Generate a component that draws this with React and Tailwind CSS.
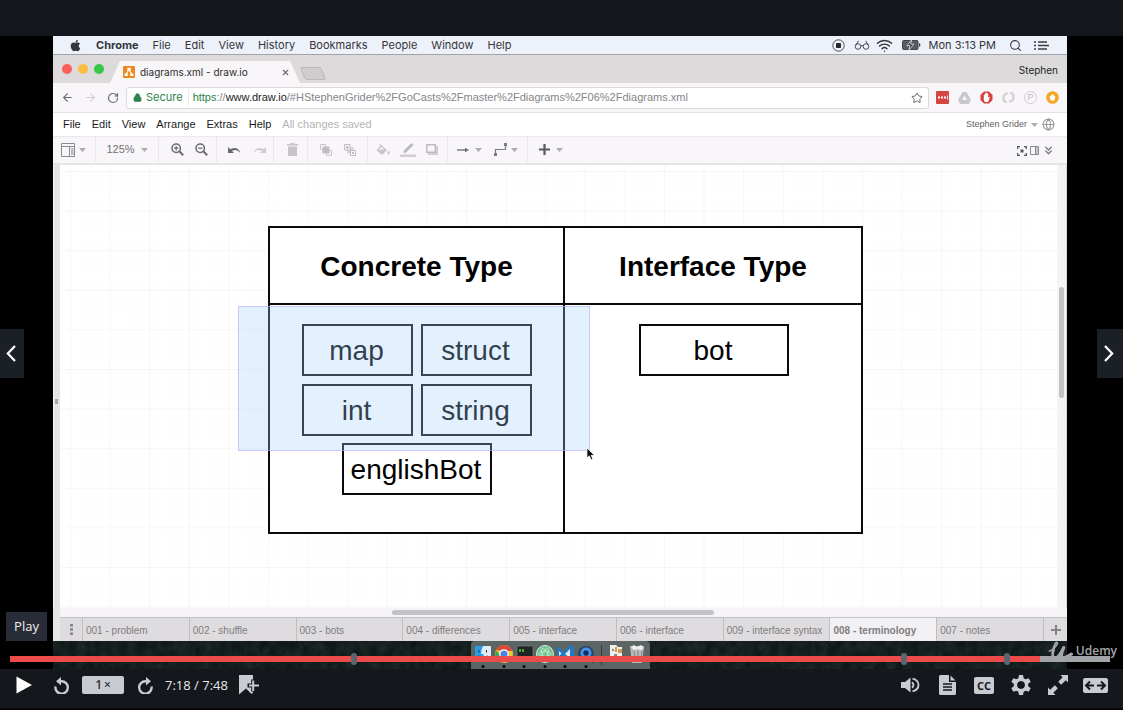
import React from "react";
import { FaApple } from "react-icons/fa";
import {
  ArrowLeft,
  ArrowRight,
  ChevronsDown,
  Globe,
  Lock,
  RotateCw,
  Search,
  Star,
  Wifi,
  X,
} from "lucide-react";

const macMenus = ["File", "Edit", "View", "History", "Bookmarks", "People", "Window", "Help"];
const drawMenus = ["File", "Edit", "View", "Arrange", "Extras", "Help"];
const pages = [
  "001 - problem",
  "002 - shuffle",
  "003 - bots",
  "004 - differences",
  "005 - interface",
  "006 - interface",
  "009 - interface syntax",
  "008 - terminology",
  "007 - notes",
];

const nodes = [
  { label: "map", place: "left-[242px] top-[159px] w-[111px]" },
  { label: "struct", place: "left-[361px] top-[159px] w-[111px]" },
  { label: "int", place: "left-[242px] top-[219px] w-[111px]" },
  { label: "string", place: "left-[361px] top-[219px] w-[111px]" },
  { label: "englishBot", place: "left-[282px] top-[278px] w-[150px]" },
  { label: "bot", place: "left-[579px] top-[159px] w-[150px]" },
];

function Caret() {
  return (
    <svg width="7" height="4" viewBox="0 0 7 4" aria-hidden="true">
      <path d="M0 0h7L3.5 4z" fill="#aeacb0" />
    </svg>
  );
}

function MacMenuBar() {
  return (
    <div className="flex h-[19px] items-center border-b border-[#a3a4aa] bg-[#edf1fa] pl-4 pr-[18px] font-[Inter,sans-serif] text-[11px] leading-4 text-[#34363b]">
      <FaApple size={13} className="mr-[14px]" />
      <nav className="flex items-center gap-[14px]">
        <button className="font-bold">Chrome</button>
        {macMenus.map((m) => (
          <button key={m}>{m}</button>
        ))}
      </nav>
      <div className="ml-auto flex items-center">
        <svg width="13" height="13" viewBox="0 0 13 13" className="mr-[9px]" aria-hidden="true">
          <circle cx="6.5" cy="6.5" r="5.700" fill="none" stroke="#4c4e54" />
          <rect x="4" y="4" width="5" height="5" rx=".8" fill="#25272b" />
        </svg>
        <svg width="16" height="10" viewBox="0 0 16 10" className="mr-[6px]" fill="none" stroke="#4c4e54" aria-hidden="true">
          <circle cx="4" cy="6.500" r="2.800" />
          <circle cx="12" cy="6.500" r="2.800" />
          <path d="M6.800 6q1.200-1 2.400 0M1.300 6 4.500.8M14.700 6l-3-5.200" />
        </svg>
        <Wifi size={17} strokeWidth={2} className="mr-[9px]" />
        <svg width="19" height="10" viewBox="0 0 19 10" className="mr-2" aria-hidden="true">
          <rect x=".5" y=".5" width="15.500" height="9" rx="1" fill="#5a5c62" stroke="#44464b" />
          <path d="M17 3v4q1.500-.5 1.500-2T17 3" fill="#44464b" />
          <path d="M9.500 0 5 5.600h3L7 10l4.800-5.800H8.700z" fill="#26282c" stroke="#edf1fa" strokeWidth=".8" />
        </svg>
        <span className="mr-[13px]">Mon 3:13 PM</span>
        <Search size={13} strokeWidth={2} className="mr-[12px]" />
        <svg width="15" height="9" viewBox="0 0 15 9" stroke="#3c3e43" strokeWidth="1.400" aria-hidden="true">
          <path d="M0 1h2M0 4.500h2M0 8h2M4 1h9M4 4.500h11M4 8h9" />
        </svg>
      </div>
    </div>
  );
}

function TabStrip() {
  return (
    <div className="flex h-7 items-end bg-[#dcdada]">
      <div className="flex h-7 w-[57px] items-center gap-[6px] pl-[9px]">
        <i className="size-[10px] rounded-full bg-[#fb5f57]" />
        <i className="size-[10px] rounded-full bg-[#fdbd40]" />
        <i className="size-[10px] rounded-full bg-[#35c84a]" />
      </div>
      <div className="flex h-[22px] w-[190px] items-center bg-[#f8f6f8] pl-[13px] pr-[10px] [clip-path:polygon(10px_0,180px_0,190px_100%,0_100%)]">
        <svg width="12" height="12" viewBox="0 0 12 12" className="mr-[5px]" aria-hidden="true">
          <rect width="12" height="12" rx="1" fill="#ee8a1c" />
          <path d="M6 3 3.200 8.500M6 3l2.800 5.500" stroke="#fff" strokeWidth="1.100" />
          <path d="M4.300 1.800h3.400v2.600H4.300zM1.600 7.400h3.200V10H1.600zM7.200 7.400h3.200V10H7.200z" fill="#fff" />
        </svg>
        <span className="text-[10px] text-[#2b2b2d] font-[Inter,sans-serif]">diagrams.xml - draw.io</span>
        <button aria-label="Close tab" className="ml-auto">
          <X size={9} strokeWidth={3} className="text-[#6a696c]" />
        </button>
      </div>
      <button aria-label="New tab" className="mb-[3px]">
        <svg width="26" height="13" viewBox="0 0 26 13" aria-hidden="true">
          <path d="M1.500.5H19q1.600 0 2.300 1.500L25 11q.5 1.500-1 1.500H7q-1.500 0-2.200-1.500L1 2Q.5.5 1.500.5z" fill="#cfcdcd" stroke="#b9b7b7" />
        </svg>
      </button>
      <span className="mb-[5px] ml-auto mr-[9px] font-[Inter,sans-serif] text-[10px] leading-4 text-[#1d1d1f]">Stephen</span>
    </div>
  );
}

function AddressBar() {
  return (
    <div className="flex h-[30px] items-center border-b border-[#e3e1e3] bg-[#f8f6f8] pr-2">
      <div className="flex w-[73px] items-center gap-[10px] pl-2">
        <button aria-label="Back"><ArrowLeft size={13} className="text-[#6b6a6d]" /></button>
        <button aria-label="Forward"><ArrowRight size={13} className="text-[#d0ced1]" /></button>
        <button aria-label="Reload"><RotateCw size={12} strokeWidth={2.400} className="text-[#6b6a6d]" /></button>
      </div>
      <div className="flex h-[22px] flex-1 items-center rounded-[3px] border border-[#dad8da] bg-white pl-[6px] pr-[5px] text-[11px]">
        <Lock size={9} fill="#2b8149" strokeWidth={2.500} className="mr-1 text-[#2b8149]" />
        <span className="border-r border-[#ececec] pr-[5px] font-[Inter,sans-serif] text-[#2b8149]">Secure</span>
        <span className="ml-1 text-[#85858a]">
          <span className="text-[#2b8149]">https</span>://<span className="text-[#222]">www.draw.io</span>
          /#HStephenGrider%2FGoCasts%2Fmaster%2Fdiagrams%2F06%2Fdiagrams.xml
        </span>
        <button aria-label="Bookmark page" className="ml-auto"><Star size={12} className="text-[#626165]" /></button>
      </div>
      <div className="flex items-center gap-[9px] pl-[7px]">
        <svg width="13" height="13" viewBox="0 0 13 13" aria-hidden="true">
          <rect width="13" height="13" rx="1" fill="#d64541" />
          <path d="M2 5.500h2v2H2zM5 5.500h2v2H5zM8 5.500h2v2H8zM11 4.500h.8v4H11z" fill="#fff" />
        </svg>
        <svg width="13" height="12" viewBox="0 0 13 12" aria-hidden="true">
          <path d="M4.500 0h4L13 8l-2 4H2L0 8z" fill="#c9c8ca" />
          <path d="M6.500 3.500 4 8h5z" fill="#f8f6f8" />
        </svg>
        <svg width="13" height="13" viewBox="0 0 13 13" aria-hidden="true">
          <path d="M4 .5h5L12.500 4v5L9 12.500H4L.5 9V4z" fill="#d93e38" />
          <path d="M3.800 4q.6-.8 1.100 0V2.500q.6-.9 1.100 0V2q.6-.9 1.100 0v.6q.6-.8 1.100 0V7l.9-1.200q1-.3.7.7L8.600 10q-.6 1.400-2.400 1.300Q3.800 11 3.800 8.800z" fill="#fff" />
        </svg>
        <svg width="13" height="13" viewBox="0 0 13 13" fill="none" stroke="#d3d1d4" strokeWidth="2.200" aria-hidden="true">
          <path d="M4.500 11.500Q.8 9.500 1.500 6T6 2.500M8.500 1.500q3.700 2 3 5.500T7 10.500" />
        </svg>
        <span className="flex size-[13px] items-center justify-center rounded-full border border-[#cfcdd0] text-[9px] leading-none text-[#bdbbbe]">P</span>
        <svg width="13" height="13" viewBox="0 0 13 13" aria-hidden="true">
          <circle cx="6.500" cy="6.500" r="6.300" fill="#f5a623" />
          <path d="M6.500 3 10 6.500H8.700v3H4.300v-3H3z" fill="#fff" />
        </svg>
      </div>
    </div>
  );
}

function DrawMenuBar() {
  return (
    <div className="flex h-[23px] items-center bg-white pl-[10px] pr-3 text-[11px] text-[#1a1a1a]">
      <nav className="flex gap-[11px]">
        {drawMenus.map((m) => (
          <button key={m}>{m}</button>
        ))}
      </nav>
      <span className="ml-[11px] text-[#b5b4b6]">All changes saved</span>
      <button className="ml-auto flex items-center gap-1 text-[9px] text-[#626165]">
        Stephen Grider
        <Caret />
      </button>
      <Globe size={13} strokeWidth={2} className="ml-1 text-[#98979a]" />
    </div>
  );
}

function ToolGroup({ width, children }) {
  return (
    <div className={`flex h-full items-center justify-center border-r border-[#eae8eb] ${width}`}>{children}</div>
  );
}

function Tool({ label, children, className = "" }) {
  return (
    <button aria-label={label} className={`flex items-center justify-center ${className}`}>
      {children}
    </button>
  );
}

function Magnifier({ plus }) {
  return (
    <svg width="13" height="13" viewBox="0 0 13 13" fill="none" stroke="#6a696c" aria-hidden="true">
      <circle cx="5.200" cy="5.200" r="4.200" strokeWidth="1.500" />
      <path d="m8.300 8.300 3.900 3.900" strokeWidth="2" />
      <path d={plus ? "M3 5.200h4.400M5.200 3v4.400" : "M3 5.200h4.400"} strokeWidth="1.200" />
    </svg>
  );
}

function Toolbar() {
  return (
    <div className="flex h-[29px] items-center border-b-2 border-t border-b-[#e6e4e8] border-t-[#ebe9ec] bg-[#f8f6f9] pb-px pr-3">
      <ToolGroup width="w-[43px] pr-[2px]">
        <Tool label="View" className="gap-1">
          <svg width="14" height="14" viewBox="0 0 14 14" fill="none" stroke="#8a898c" aria-hidden="true">
            <path d="M.5.5h13v13H.5zM.5 3.500h13M8.500 3.500v10" />
            <path d="M10 5h2.500v7H10z" fill="#b9b8bb" stroke="none" />
          </svg>
          <Caret />
        </Tool>
      </ToolGroup>
      <ToolGroup width="w-[63px]">
        <button className="flex items-center gap-[6px] text-[11px] text-[#727174]">
          125%
          <Caret />
        </button>
      </ToolGroup>
      <ToolGroup width="w-[58px] gap-[11px] pl-[3px]">
        <Tool label="Zoom in"><Magnifier plus /></Tool>
        <Tool label="Zoom out"><Magnifier /></Tool>
      </ToolGroup>
      <ToolGroup width="w-[57px] gap-3 pl-[3px]">
        <Tool label="Undo">
          <svg width="13" height="8" viewBox="0 0 13 8" aria-hidden="true">
            <path d="M0 1v6h6L4 5q4.500-2.500 8.500 2Q9.500-.5 2.300 3.300z" fill="#6a696c" />
          </svg>
        </Tool>
        <Tool label="Redo">
          <svg width="13" height="8" viewBox="0 0 13 8" aria-hidden="true">
            <path d="M13 1v6H7l2-2Q4.500 2.500.5 7 3.500-.5 10.700 3.300z" fill="#cdcbce" />
          </svg>
        </Tool>
      </ToolGroup>
      <ToolGroup width="w-[34px] pl-[3px]">
        <Tool label="Delete">
          <svg width="11" height="13" viewBox="0 0 11 13" aria-hidden="true">
            <path d="M3.500 0h4v1H11v1.500H0V1h3.500zM1 3.500h9V13H1z" fill="#c6c4c7" />
          </svg>
        </Tool>
      </ToolGroup>
      <ToolGroup width="w-[60px] gap-3">
        <Tool label="To front">
          <svg width="12" height="12" viewBox="0 0 12 12" aria-hidden="true">
            <path d="M.5.5h5v5h-5zM6.500 6.500h5v5h-5z" fill="none" stroke="#c9c7ca" />
            <path d="M2.500 2.500h7v7h-7z" fill="#bfbdc0" />
          </svg>
        </Tool>
        <Tool label="To back">
          <svg width="12" height="12" viewBox="0 0 12 12" aria-hidden="true">
            <path d="M3 3h6.500v6.500H3z" fill="#d5d3d6" />
            <path d="M.5.5h5.500v5.500H.5zM6.500 6.500h5v5h-5z" fill="#f8f6f9" stroke="#bfbdc0" />
            <path d="M2 2h2.500v2.500H2zM8 8h2v2H8z" fill="#bfbdc0" />
          </svg>
        </Tool>
      </ToolGroup>
      <ToolGroup width="w-[80px] gap-[10px] pr-[2px]">
        <Tool label="Fill colour">
          <svg width="14" height="12" viewBox="0 0 14 12" aria-hidden="true">
            <path d="m4 0 7 6-5 5-5.500-5 4-4L3 1z" fill="#c6c4c7" />
            <path d="M12.500 6.500q2.500 4 0 4t0-4" fill="#c6c4c7" />
            <path d="m2.500 5.500 3-2.500L8.500 5.500z" fill="#f8f6f9" />
          </svg>
        </Tool>
        <Tool label="Line colour">
          <svg width="16" height="15" viewBox="0 0 16 15" aria-hidden="true">
            <path d="M4 8.500 11.500 1l2 2L6 10.500l-2.500.5z" fill="#bbb9bc" />
            <path d="M0 12.500h16V15H0z" fill="#cfcdd0" />
          </svg>
        </Tool>
        <Tool label="Shadow">
          <svg width="12" height="11" viewBox="0 0 12 11" aria-hidden="true">
            <path d="M2 2h10v9H2z" fill="#cfcdd0" />
            <path d="M.8.800h8.500v7.500H.8z" fill="#f8f6f9" stroke="#bbb9bc" strokeWidth="1.400" />
          </svg>
        </Tool>
      </ToolGroup>
      <ToolGroup width="w-[80px] gap-3">
        <Tool label="Connection" className="gap-[6px]">
          <svg width="12" height="6" viewBox="0 0 12 6" aria-hidden="true">
            <path d="M0 3h9" stroke="#6a696c" strokeWidth="1.300" />
            <path d="M8 .8 12 3 8 5.200z" fill="#6a696c" />
          </svg>
          <Caret />
        </Tool>
        <Tool label="Waypoints" className="gap-1">
          <svg width="13" height="13" viewBox="0 0 13 13" aria-hidden="true">
            <path d="M1.500 11V6.500h10V2" fill="none" stroke="#7c7b7e" strokeWidth="1.200" />
            <path d="M0 10h3v3H0zM10 0h3v3h-3z" fill="#7c7b7e" />
          </svg>
          <Caret />
        </Tool>
      </ToolGroup>
      <Tool label="Insert" className="ml-[11px] gap-[6px]">
        <svg width="11" height="11" viewBox="0 0 11 11" aria-hidden="true">
          <path d="M0 5.500h11M5.500 0v11" stroke="#59585b" strokeWidth="2.200" />
        </svg>
        <Caret />
      </Tool>
      <div className="ml-auto flex items-center gap-[3px] pt-[2px]">
        <Tool label="Fullscreen">
          <svg width="10" height="10" viewBox="0 0 10 10" fill="none" stroke="#59585b" strokeWidth="1.300" aria-hidden="true">
            <path d="M3 .7H.7V3M7 .7h2.300V3M3 9.300H.7V7M7 9.300h2.300V7" />
            <path d="M3.500 3.500h3v3h-3z" fill="#59585b" stroke="none" />
          </svg>
        </Tool>
        <Tool label="Format">
          <svg width="9" height="9" viewBox="0 0 9 9" aria-hidden="true">
            <path d="M.5.5h8v8h-8zM5.500.5v8" fill="none" stroke="#8a898c" />
            <path d="M6 1h2v7H6z" fill="#c6c4c7" />
          </svg>
        </Tool>
        <Tool label="Collapse"><ChevronsDown size={13} strokeWidth={2.500} className="text-[#7c7b7e]" /></Tool>
      </div>
    </div>
  );
}

function Canvas() {
  return (
    <div className="flex min-h-[443px] flex-1">
      <div className="flex w-[7px] items-center border-l border-[#f8f8f8] bg-[#e7e5e8]">
        <i className="ml-px mt-[30px] h-[5px] w-[3px] bg-[#a9a8aa]" />
      </div>
      <div className="relative min-w-0 flex-1 overflow-hidden bg-white">
        <svg className="absolute inset-0 size-full" aria-hidden="true">
          <defs>
            <pattern id="grid" x="10" y="6" width="39.600" height="39.600" patternUnits="userSpaceOnUse">
              <path d="M10.500 0v39.600M20.500 0v39.600M30.500 0v39.600M0 10.500h39.600M0 20.500h39.600M0 30.500h39.600" stroke="#fdfdfe" />
              <path d="M.5 0v39.600M0 .5h39.600" stroke="#f6f6f7" />
            </pattern>
          </defs>
          <rect width="100%" height="100%" fill="url(#grid)" />
        </svg>
        <div className="absolute left-[208px] top-[61px] grid h-[308px] w-[595px] grid-cols-[295px_1fr] grid-rows-[77px_1fr] border-2 border-[#0a0a0c] bg-white text-center text-[28px] font-bold text-black">
          <h2 className="flex items-center justify-center border-b-2 border-r-2 border-[#0a0a0c] pt-[2px]">Concrete Type</h2>
          <h2 className="flex items-center justify-center border-b-2 border-[#0a0a0c] pt-[2px]">Interface Type</h2>
          <div className="border-r-2 border-[#0a0a0c]" />
          <div />
        </div>
        {nodes.map((n) => (
          <div
            key={n.label}
            className={`absolute flex h-[52px] items-center justify-center border-2 border-[#0a0a0c] bg-white pr-[2px] pt-[2px] text-[28px] text-black ${n.place}`}
          >
            {n.label}
          </div>
        ))}
        <div className="absolute left-[178px] top-[141px] h-[145px] w-[352px] border border-[#b4aff0]/60 bg-[#a2d0ff]/30" />
        <svg className="absolute left-[526px] top-[282px]" width="9" height="14" viewBox="0 0 9 14" aria-hidden="true">
          <path d="M1 1v10l2.300-2.200L5 12.700l1.700-.7-1.600-3.700H8.300z" fill="#0a0a0a" stroke="#fff" strokeWidth=".7" />
        </svg>
      </div>
      <div className="w-[10px] border-r border-[#d8d6d9] bg-[#f5f3f6] pl-[2px] pt-[122px]">
        <div className="h-[111px] w-[5px] rounded-full bg-[#c3c2c4]" />
      </div>
    </div>
  );
}

function PageTabs() {
  return (
    <div className="flex h-6 overflow-hidden bg-[#e7e5e8] pl-[7px] text-[10px] text-[#7e7d80]">
      <div className="flex flex-1 border-t border-[#c3c2c4] bg-[#dedcde]">
        <button aria-label="Pages" className="flex w-[22px] items-center justify-center">
          <svg width="3" height="11" viewBox="0 0 3 11" aria-hidden="true">
            <path d="M0 0h3v2.500H0zM0 4.200h3v2.500H0zM0 8.500h3V11H0z" fill="#858487" />
          </svg>
        </button>
        {pages.map((p) => (
          <button
            key={p}
            className={`min-w-0 flex-1 whitespace-nowrap border-l border-[#bfbdc0] pl-[3px] pt-px text-left ${
              p.startsWith("008") ? "bg-[#f2f0f3] font-bold" : ""
            }`}
          >
            {p}
          </button>
        ))}
        <button aria-label="Add page" className="flex w-6 items-center justify-center border-l border-[#bfbdc0]">
          <svg width="10" height="10" viewBox="0 0 10 10" aria-hidden="true">
            <path d="M0 5h10M5 0v10" stroke="#858487" strokeWidth="2" />
          </svg>
        </button>
      </div>
    </div>
  );
}

function Dock() {
  return (
    <svg width="179" height="28" viewBox="0 0 179 28" className="mx-auto block" role="img" aria-label="Dock">
      <path d="M0 28V4q0-4 4-4h171q4 0 4 4v24z" fill="#5b6664" />
      <rect x="4" y="5" width="16" height="15" rx="1" fill="#e3edf5" />
      <path d="M4 5h8q-2 4-2 8h2.500v7H4z" fill="#259de4" />
      <path d="M8 9v2.500M15.500 9v2.500M7 15q5 3 10 0" stroke="#23313d" fill="none" />
      <circle cx="33" cy="13" r="9" fill="#f0c52e" />
      <path d="M25 9a9 9 0 0 1 16.500 1H33z" fill="#dd4a3c" />
      <path d="M25 9a9 9 0 0 0 6 12.500l3-5-5-2z" fill="#3ca456" />
      <circle cx="33" cy="13" r="4.200" fill="#4784ec" stroke="#fff" strokeWidth="1.200" />
      <rect x="46" y="5" width="16" height="15" rx="1" fill="#202424" stroke="#777e7c" strokeWidth=".7" />
      <path d="M48 8h2v3h-2zM51 8h2v3h-2z" fill="#36b33e" />
      <circle cx="74" cy="13" r="8.500" fill="#73c390" stroke="#d3e4d9" />
      <g fill="none" stroke="#c9eed6" strokeWidth=".7">
        <ellipse cx="74" cy="13" rx="6" ry="2.500" />
        <ellipse cx="74" cy="13" rx="6" ry="2.500" transform="rotate(60 74 13)" />
        <ellipse cx="74" cy="13" rx="6" ry="2.500" transform="rotate(120 74 13)" />
      </g>
      <path d="m99 4 4 2v14l-4 2-7-7-4 3-2-1V7l2-1 5 5z" fill="#2678bd" />
      <path d="m99 8-5 5 5 4zM88 10v5l2.500-2.500z" fill="#dfeaf3" />
      <circle cx="115" cy="13" r="8" fill="#28466d" />
      <circle cx="115" cy="12" r="5.500" fill="#4a90ec" />
      <circle cx="115" cy="12" r="2.700" fill="#17315a" />
      <path d="m117 16 6 5" stroke="#353e4b" strokeWidth="3" />
      <path d="M130.500 4v20" stroke="#343d3b" />
      <path d="M139 4h6l2 2h4v14h-12z" fill="#eeeeeb" />
      <path d="M144 6h2v5h-2zM147 8h4v4h-4z" fill="#d69b4e" />
      <path d="M141 8h2v2h-2zM143 13h3v2h-3z" fill="#888" />
      <path d="M159 5h14l-2 17h-10z" fill="#b7bab9" />
      <path d="m160 6 3-2 3 2 4-2 3 3-3 2-3-1-4 1z" fill="#efefef" />
      <path d="m163 10 1 9m3-9v9m4-9-1 9" stroke="#858b89" />
      <g fill="#060808">
        {[12, 33, 53, 74, 94, 115].map((x) => (
          <circle key={x} cx={x} cy="25.500" r="1.500" />
        ))}
      </g>
    </svg>
  );
}

function Desktop() {
  return (
    <div className="relative h-7 bg-[#0e1617]">
      <svg className="absolute inset-0 size-full" aria-hidden="true">
        <filter id="grass" colorInterpolationFilters="sRGB">
          <feTurbulence type="fractalNoise" baseFrequency=".12 .09" numOctaves="3" seed="4" />
          <feColorMatrix values="0 0 0 0 .16  0 0 0 0 .22  0 0 0 0 .2  .9 0 0 0 -.2" />
        </filter>
        <rect width="100%" height="100%" filter="url(#grass)" />
      </svg>
      <div className="relative">
        <Dock />
      </div>
    </div>
  );
}

function Udemy() {
  return (
    <div className="absolute bottom-2 right-[6px] flex items-center gap-[3px] text-[#a4a6a9]">
      <svg width="25" height="20" viewBox="0 0 25 20" fill="none" stroke="currentColor" strokeLinecap="round" strokeLinejoin="round" aria-hidden="true">
        <path d="M1.500 10Q7 8 9.500 2.500 9 .5 7.300 2.300 5.300 6 4.600 11" strokeWidth="1.700" />
        <path d="M5.600 8Q4.200 13 4.800 15.500 6 19 9.500 16 13 12.500 15.500 7" strokeWidth="2.800" />
        <path d="M15.800 6.500Q12.500 13.500 14 16 17 17.500 23.500 13" strokeWidth="3" />
      </svg>
      <span className="font-['Open_Sans',sans-serif] text-[12px] font-semibold leading-5">Udemy</span>
    </div>
  );
}

function Progress() {
  return (
    <div className="absolute bottom-[7px] left-[10px] right-[13px] h-[6px]">
      <input
        type="range"
        aria-label="Video position"
        min="0"
        max="468"
        defaultValue="438"
        className="block h-[6px] w-full appearance-none bg-[linear-gradient(to_right,#eb4b4b_0_93.600%,#a1a5a9_93.600%)] [&::-webkit-slider-thumb]:size-0 [&::-webkit-slider-thumb]:appearance-none"
      />
      <i className="absolute -top-[3px] left-[31%] h-3 w-[6px] rounded-[3px] bg-[#5d6472]" />
      <i className="absolute -top-[3px] left-[81%] h-3 w-[6px] rounded-[3px] bg-[#5d6472]" />
      <i className="absolute -top-[3px] left-[90%] ml-[4px] h-3 w-[6px] rounded-[3px] bg-[#5d6472]" />
    </div>
  );
}

function Controls() {
  return (
    <div className="flex h-[39px] items-center bg-[#14171c] pb-[7px] pl-4 pr-[15px] font-['Open_Sans',sans-serif] text-[#cacbd0]">
      <button aria-label="Play" className="mr-[22px]">
        <svg width="16" height="18" viewBox="0 0 16 18" aria-hidden="true"><path d="M.5.5 16 9 .5 17.500z" fill="#fff" /></svg>
      </button>
      <button aria-label="Rewind" className="mr-3">
        <svg width="16" height="17" viewBox="0 0 16 17" aria-hidden="true">
          <path d="M1.500 9.500A6.200 6.200 0 1 0 7.500 4.300H6" fill="none" stroke="currentColor" strokeWidth="2.400" />
          <path d="M2 4.300 7 0v8.500z" fill="currentColor" />
        </svg>
      </button>
      <button className="mr-[13px] h-[18px] w-[42px] rounded-[2px] bg-[#cacbd0] text-[12px] font-semibold leading-[18px] text-[#33353c]">
        1<span className="pl-[2px]">×</span>
      </button>
      <button aria-label="Forward" className="mr-3">
        <svg width="16" height="17" viewBox="0 0 16 17" aria-hidden="true">
          <path d="M14.500 9.500A6.200 6.200 0 1 1 8.500 4.300H10" fill="none" stroke="currentColor" strokeWidth="2.400" />
          <path d="M14 4.300 9 0v8.500z" fill="currentColor" />
        </svg>
      </button>
      <span className="mr-[11px] text-[13px] leading-5 text-[#e8e9ec]">7:18 / 7:48</span>
      <button aria-label="Add bookmark">
        <svg width="20" height="20" viewBox="0 0 20 20" aria-hidden="true">
          <path d="M0 0h14v17.500L12.500 19 7 13.500 0 19.500z" fill="currentColor" />
          <path d="M8.500 10.500H20M14.200 4.500v12" stroke="#14171c" strokeWidth="4" />
          <path d="M10 10.500h10M14.200 5.500v10.500" stroke="currentColor" strokeWidth="2" />
        </svg>
      </button>
      <div className="ml-auto flex items-center">
        <button aria-label="Volume" className="mr-[19px]">
          <svg width="19" height="16" viewBox="0 0 19 16" aria-hidden="true">
            <path d="M0 5h4l5.500-4.500v15L4 11H0z" fill="currentColor" />
            <path d="M11 5.200q3 2.800 0 5.600M11.500 1.700q6 1.500 6 6.300t-6 6.300" fill="none" stroke="currentColor" strokeWidth="1.900" />
          </svg>
        </button>
        <button aria-label="Transcript" className="mr-[18px]">
          <svg width="17" height="20" viewBox="0 0 17 20" aria-hidden="true">
            <path d="M1.500 0H10v7h7v11.500q0 1.500-1.500 1.500h-14Q0 20 0 18.500v-17Q0 0 1.500 0zM11.500.5 16.500 5.500h-5z" fill="currentColor" />
            <path d="M4 9h9M4 12h9M4 15h9" stroke="#14171c" strokeWidth="1.500" />
          </svg>
        </button>
        <button aria-label="Captions" className="mr-[17px] flex h-[17px] w-5 items-center justify-center rounded-[2px] bg-[#cacbd0] text-[11px] font-bold leading-none text-[#14171c]">
          CC
        </button>
        <button aria-label="Settings" className="mr-[17px]">
          <svg width="20" height="20" viewBox="-10 -10 20 20" aria-hidden="true">
            <g fill="currentColor">
              <path d="M-2-10h4L3-5h-6zM-2 10h4L3 5h-6z" />
              <path d="M-2-10h4L3-5h-6zM-2 10h4L3 5h-6z" transform="rotate(60)" />
              <path d="M-2-10h4L3-5h-6zM-2 10h4L3 5h-6z" transform="rotate(120)" />
            </g>
            <circle r="5.500" fill="none" stroke="currentColor" strokeWidth="3.500" />
            <circle r="3.500" fill="#14171c" />
          </svg>
        </button>
        <button aria-label="Fullscreen" className="mr-[15px]">
          <svg width="20" height="20" viewBox="0 0 20 20" aria-hidden="true">
            <path d="M12.500 0H20v7.500L17.800 5.300 13.200 9.800 10.200 6.800 14.700 2.200zM0 12.500V20h7.500L5.300 17.800 9.800 13.200 6.800 10.200 2.200 14.700z" fill="currentColor" />
          </svg>
        </button>
        <button aria-label="Expanded view">
          <svg width="25" height="15" viewBox="0 0 25 15" aria-hidden="true">
            <rect width="25" height="15" rx="2" fill="currentColor" />
            <path d="M3.500 7.500h7.500M14 7.500h7.500M7 3.500l-4 4 4 4M18 3.500l4 4-4 4" fill="none" stroke="#14171c" strokeWidth="2" />
          </svg>
        </button>
      </div>
    </div>
  );
}

export default function App() {
  return (
    <main className="flex min-h-screen flex-col bg-[#14171c] font-['Liberation_Sans',Arial,sans-serif]">
      <div className="h-9" />
      <section className="relative flex flex-1 flex-col bg-black pl-[53px] pr-14">
        <div className="flex flex-1 flex-col bg-white">
          <MacMenuBar />
          <TabStrip />
          <AddressBar />
          <DrawMenuBar />
          <Toolbar />
          <Canvas />
          <div className="flex h-[9px] items-center border-l-[7px] border-[#e7e5e8] bg-[#f6f4f7] pr-[353px]">
            <div className="ml-auto h-[5px] w-[322px] rounded-full bg-[#c3c2c4]" />
          </div>
          <PageTabs />
          <Desktop />
        </div>
        <button aria-label="Previous lecture" className="absolute left-0 top-[293px] flex h-[49px] w-6 items-center justify-center bg-[#1b1f26] pr-[2px] text-white">
          <svg width="10" height="17" viewBox="0 0 10 17" fill="none" stroke="currentColor" strokeWidth="2.200" aria-hidden="true">
            <path d="M9 1 1.800 8.500 9 16" />
          </svg>
        </button>
        <button aria-label="Next lecture" className="absolute right-0 top-[293px] flex h-[49px] w-[26px] items-center justify-center bg-[#1b1f26] pr-[2px] text-white">
          <svg width="10" height="17" viewBox="0 0 10 17" fill="none" stroke="currentColor" strokeWidth="2.200" aria-hidden="true">
            <path d="m1 1 7.200 7.500L1 16" />
          </svg>
        </button>
        <div role="tooltip" className="absolute bottom-7 left-[6px] flex h-[29px] w-[41px] items-center justify-center bg-[#282c37] font-['Open_Sans',sans-serif] text-[13px] text-[#eeeff1]">
          Play
        </div>
        <Progress />
        <Udemy />
      </section>
      <Controls />
      <div className="h-[2px] bg-[#0b0708]" />
    </main>
  );
}
